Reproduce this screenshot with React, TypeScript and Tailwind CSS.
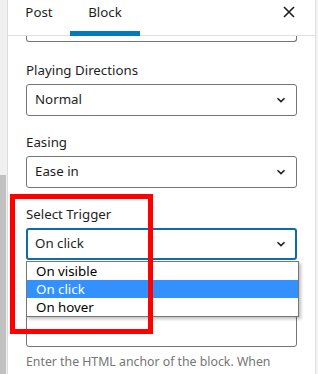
import { ReactNode } from "react";

function Chevron() {
  return (
    <svg width="10" height="6" viewBox="0 0 10 6" fill="none" className="shrink-0">
      <path d="M1.5 1.2L5 4.6l3.5-3.4" stroke="#1e1e1e" strokeWidth="1.6" />
    </svg>
  );
}

function Label({ children }: { children: ReactNode }) {
  return <div className="text-[13.3px] leading-[20px] text-[#1e1e1e]">{children}</div>;
}

function Select({ value, focused }: { value: string; focused?: boolean }) {
  return (
    <div
      className={
        focused
          ? "mt-[4px] h-[32px] rounded-[3px] border-2 border-[#0b6ea6] flex items-center justify-between pl-[7px] pr-[9px]"
          : "mt-[4px] h-[32px] rounded-[3px] border border-[#757575] flex items-center justify-between pl-[8px] pr-[10px]"
      }
    >
      <span className="text-[13.3px] text-[#1e1e1e]">{value}</span>
      <Chevron />
    </div>
  );
}

export default function App() {
  const options = ["On visible", "On click", "On hover"];

  return (
    <div
      className="relative w-[318px] h-[374px] overflow-hidden bg-white flex"
      style={{ fontFamily: '"Noto Sans", "Open Sans", sans-serif' }}
    >
      {/* left panel edge with scrollbar */}
      <div className="relative w-[8px] shrink-0 bg-[#f0f0f0] border-r border-[#dcdcdc]">
        <div className="absolute left-0 top-[175px] bottom-0 w-[6px] bg-[#c1c1c1]" />
      </div>

      {/* sidebar */}
      <div className="flex-1 flex flex-col">
        <div className="h-[36px] shrink-0 border-b border-[#e0e0e0] flex items-start">
          <div className="w-[62px] h-full pt-[2px] text-center text-[13.3px] leading-[20px] text-[#1e1e1e]">Post</div>
          <div className="relative w-[70px] h-full pt-[2px] text-center text-[13.3px] leading-[20px] text-[#1e1e1e]">
            Block
            <div className="absolute left-0 right-0 bottom-[-1px] h-[5px] bg-[#007cba]" />
          </div>
          <div className="ml-auto mr-[20px] mt-[6px]">
            <svg width="12" height="12" viewBox="0 0 12 12" fill="none">
              <path d="M1 1l10 10M11 1L1 11" stroke="#1e1e1e" strokeWidth="1.6" />
            </svg>
          </div>
        </div>

        <div className="relative px-[18px] flex flex-col">
          <div className="h-[6px] rounded-b-[3px] border border-t-0 border-[#757575]" />

          <div className="mt-[18px]">
            <Label>Playing Directions</Label>
            <Select value="Normal" />
          </div>

          <div className="mt-[16px]">
            <Label>Easing</Label>
            <Select value="Ease in" />
          </div>

          <div className="mt-[16px]">
            <Label>Select Trigger</Label>
            <Select value="On click" focused />
          </div>

          {/* anchor field, its label sits under the open list */}
          <div className="mt-[55px]">
            <div className="h-[32px] rounded-[3px] border border-[#757575]" />
            <div className="mt-[6px] text-[12.3px] leading-[18px] text-[#757575]">
              Enter the HTML anchor of the block. When
            </div>
          </div>

          {/* open dropdown list */}
          <div className="absolute left-[18px] top-[225px] w-[273px] bg-white border border-[#767676] shadow-[2px_2px_3px_rgba(0,0,0,0.25)] flex flex-col">
            {options.map((o) => (
              <div
                key={o}
                className={
                  o === "On click"
                    ? "h-[18px] pl-[9px] text-[13.3px] leading-[18px] bg-[#3390ff] text-white"
                    : "h-[18px] pl-[9px] text-[13.3px] leading-[18px] text-black"
                }
              >
                {o}
              </div>
            ))}
          </div>
        </div>
      </div>

      {/* right edge */}
      <div className="w-[3px] shrink-0 bg-[#f3f3f3] border-l border-[#e0e0e0]" />

      {/* red annotation box */}
      <div className="absolute left-[10px] top-[194px] w-[143px] h-[140px] border-[5px] border-[#ff0000]" />
    </div>
  );
}
